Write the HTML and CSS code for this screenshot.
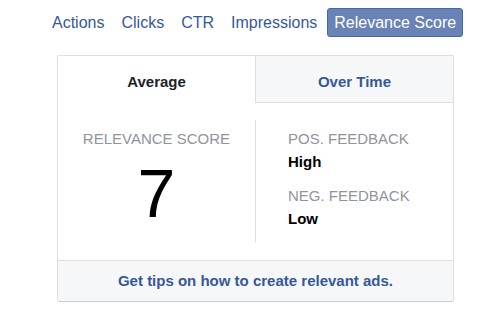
FILE: index.html
```html
<!DOCTYPE html>
<html>
<head>
<meta charset="utf-8">
<link rel="stylesheet" href="styles.css">
</head>
<body>
<nav class="nav">
  <a class="nav-item">Actions</a>
  <a class="nav-item">Clicks</a>
  <a class="nav-item">CTR</a>
  <a class="nav-item">Impressions</a>
  <a class="nav-item active">Relevance Score</a>
</nav>
<section class="card">
  <div class="tabs">
    <div class="tab selected">Average</div>
    <div class="tab other">Over Time</div>
  </div>
  <div class="body">
    <div class="score-col">
      <div class="label">RELEVANCE SCORE</div>
      <div class="score">7</div>
    </div>
    <div class="feedback-col">
      <div class="label">POS. FEEDBACK</div>
      <div class="value">High</div>
      <div class="label">NEG. FEEDBACK</div>
      <div class="value">Low</div>
    </div>
  </div>
  <div class="footer"><a class="tips">Get tips on how to create relevant ads.</a></div>
</section>
</body>
</html>
```
FILE: styles.css
```css
* { box-sizing: border-box; }
html, body { margin: 0; padding: 0; background: #fff; }
body {
  font-family: "Liberation Sans", Arial, Helvetica, sans-serif;
  width: 486px;
  height: 312px;
  overflow: hidden;
}
.nav {
  display: flex;
  align-items: center;
  gap: 1px;
  padding: 8px 0 0 44px;
  height: 37px;
}
.nav-item {
  font-size: 16px;
  color: #365899;
  padding: 0 8px;
  height: 29px;
  line-height: 29px;
  white-space: nowrap;
}
.nav-item.active {
  margin-left: 1px;
  background: #6a83b7;
  border: 1px solid #4a66a3;
  border-radius: 3px;
  color: #fff;
  line-height: 28px;
  padding: 0 6px;
}
.card {
  margin: 18px 0 0 57px;
  width: 397px;
  border: 1px solid #dddfe2;
  border-bottom-color: #c9ccd1;
  border-radius: 2px;
}
.tabs {
  display: grid;
  grid-template-columns: 197px 1fr;
  height: 47px;
}
.tab {
  font-size: 15px;
  font-weight: bold;
  text-align: center;
  padding-top: 5px;
  line-height: 41px;
}
.tab.selected { color: #1d2129; }
.tab.other {
  color: #365899;
  background: #f6f7f9;
  border-left: 1px solid #dddfe2;
  border-bottom: 1px solid #dddfe2;
}
.body {
  display: grid;
  grid-template-columns: 197px 1fr;
  padding: 17px 0 18px;
}
.label {
  font-size: 15px;
  line-height: 18px;
  color: #90949c;
  white-space: nowrap;
}
.score-col {
  text-align: center;
  padding-top: 10px;
}
.score {
  font-size: 68px;
  line-height: 68px;
  color: #000;
  margin-top: 11px;
}
.feedback-col {
  border-left: 1px solid #dddfe2;
  height: 122px;
  padding: 10px 0 0 32px;
}
.value {
  font-size: 15px;
  font-weight: bold;
  line-height: 18px;
  color: #000;
  margin: 5px 0 16px;
}
.footer {
  border-top: 1px solid #dddfe2;
  background: #f6f7f9;
  height: 41px;
  text-align: center;
  line-height: 40px;
}
.tips {
  font-size: 15px;
  font-weight: bold;
  color: #365899;
}
```
